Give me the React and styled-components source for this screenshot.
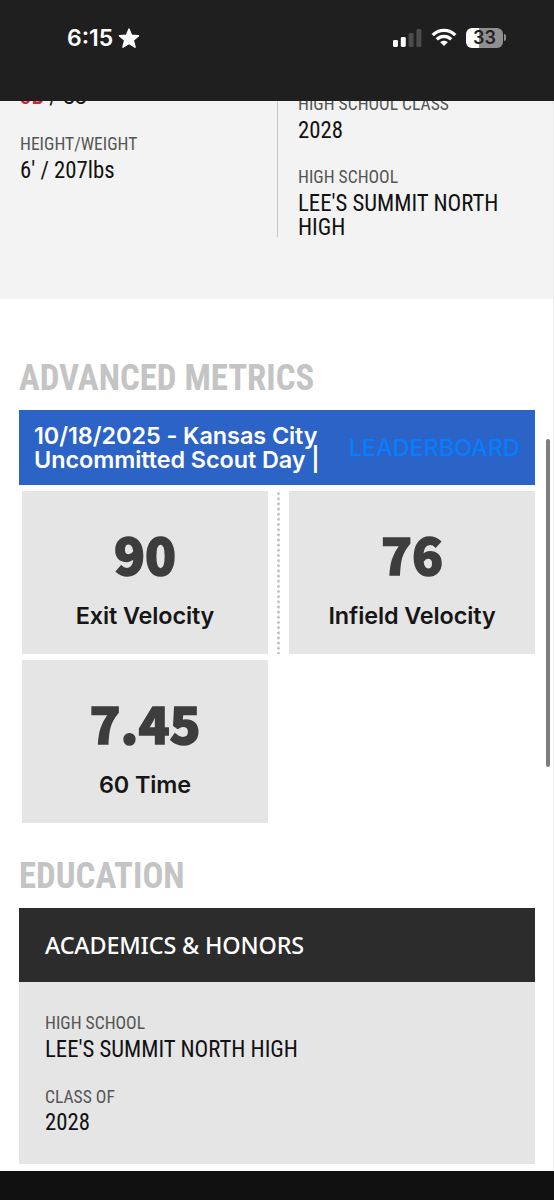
import React from "react";
import styled, { createGlobalStyle } from "styled-components";

const metricas = [
    { valor: '90', nombre: 'Exit Velocity' },
    { valor: '76', nombre: 'Infield Velocity', separador: true },
    { valor: '7.45', nombre: '60 Time' },
];

const Dato = ({ etiqueta, children }) => {
    return (
        <ContenedorDato>
            <Etiqueta>{etiqueta}</Etiqueta>
            <Valor>{children}</Valor>
        </ContenedorDato>
    )
}

const BarraEstado = () => {
    return (
        <Estado>
            <Hora>
                6:15
                <svg width="22" height="21" viewBox="0 0 22 21" fill="#fff">
                    <path d="M11 1.2L13.5 7.4L20.4 7.8L15.2 12.2L17 19.1L11 15.4L5 19.1L6.8 12.2L1.6 7.8L8.5 7.4Z" stroke="#fff" strokeWidth="1.6" strokeLinejoin="round" />
                </svg>
            </Hora>
            <Indicadores>
                <svg width="30" height="20" viewBox="0 0 30 20">
                    <rect x="1" y="12" width="5" height="7" rx="1.4" fill="#fff" />
                    <rect x="8.8" y="9" width="5" height="10" rx="1.4" fill="#fff" />
                    <rect x="16.6" y="5" width="5" height="14" rx="1.4" fill="#4c4c4c" />
                    <rect x="24.4" y="1" width="5" height="18" rx="1.4" fill="#4c4c4c" />
                </svg>
                <svg width="26" height="19" viewBox="0 0 26 19" fill="none" stroke="#fff" strokeWidth="3.2">
                    <path d="M1.7 7.1C8 0.8 18 0.8 24.3 7.1" />
                    <path d="M5.8 11.3C9.8 7.3 16.2 7.3 20.2 11.3" />
                    <path d="M13 18L9.2 14.2C11.3 12.2 14.7 12.2 16.8 14.2Z" fill="#fff" stroke="none" />
                </svg>
                <Bateria><Carga>33</Carga><Polo /></Bateria>
            </Indicadores>
        </Estado>
    )
}

const App = () => {
    return (
        <>
            <EstiloGlobal />
            <Pantalla>
                <BarraEstado />
                <Perfil>
                    <Columna $subir="43.4px">
                        <Dato etiqueta="POSITION"><Posicion>3B</Posicion> / SS</Dato>
                        <Dato etiqueta="HEIGHT/WEIGHT">6' / 207lbs</Dato>
                    </Columna>
                    <Columna $subir="10.2px" $borde>
                        <Dato etiqueta="HIGH SCHOOL CLASS">2028</Dato>
                        <Dato etiqueta="HIGH SCHOOL">LEE'S SUMMIT NORTH<br />HIGH</Dato>
                    </Columna>
                </Perfil>
                <Contenido>
                    <Titulo>ADVANCED METRICS</Titulo>
                    <Evento>
                        <NombreEvento>10/18/2025 - Kansas City<br />Uncommitted Scout Day |</NombreEvento>
                        <Enlace>LEADERBOARD</Enlace>
                    </Evento>
                    <Rejilla>
                        {metricas.map(({ valor, nombre, separador }) => (
                            <React.Fragment key={nombre}>
                                {separador ? <Puntos /> : null}
                                <Tarjeta>
                                    <Numero>{valor}</Numero>
                                    <NombreMetrica>{nombre}</NombreMetrica>
                                </Tarjeta>
                            </React.Fragment>
                        ))}
                    </Rejilla>
                    <Titulo>EDUCATION</Titulo>
                    <EncabezadoPanel>ACADEMICS &amp; HONORS</EncabezadoPanel>
                    <Panel>
                        <Dato etiqueta="HIGH SCHOOL">LEE'S SUMMIT NORTH HIGH</Dato>
                        <Dato etiqueta="CLASS OF">2028</Dato>
                    </Panel>
                </Contenido>
                <BarraInferior />
                <Desplazamiento />
            </Pantalla>
        </>
    )
}

export default App;

const EstiloGlobal = createGlobalStyle`
    * {
        box-sizing: border-box;
    }

    body {
        margin: 0;
        background: #fff;
    }
`;

const Pantalla = styled.div`
    width: 554px;
    height: 1200px;
    position: relative;
    overflow: hidden;
    display: flex;
    flex-direction: column;
    background: #fff;
    font-family: Inter, "Liberation Sans", sans-serif;
`;

const Estado = styled.header`
    height: 101px;
    flex: none;
    display: flex;
    justify-content: space-between;
    align-items: flex-start;
    padding: 25px 48px 0 67px;
    background: #1f1f1f;
    position: relative;
    z-index: 1;
`;

const Hora = styled.div`
    height: 26px;
    display: flex;
    align-items: center;
    gap: 5px;
    color: #fff;
    font-size: 23px;
    font-weight: 600;
`;

const Indicadores = styled.div`
    height: 25px;
    display: flex;
    align-items: center;
    gap: 9px;
`;

const Bateria = styled.div`
    display: flex;
    align-items: center;
    gap: 1px;
`;

const Carga = styled.div`
    width: 37px;
    height: 20px;
    border-radius: 6px;
    background: linear-gradient(to right, #fff 13px, #8f8f8f 13px);
    color: #1f1f1f;
    font-size: 18px;
    font-weight: 600;
    line-height: 20px;
    text-align: center;
`;

const Polo = styled.div`
    width: 2px;
    height: 7px;
    border-radius: 0 2px 2px 0;
    background: #8f8f8f;
`;

const Perfil = styled.section`
    height: 198px;
    flex: none;
    display: flex;
    align-items: flex-start;
    padding: 0 20px;
    background: #f3f3f3;
    border-right: 1px solid #e9e9e9;
`;

const Columna = styled.div`
    width: 257px;
    flex: none;
    height: ${({ $borde }) => $borde ? '146px' : 'auto'};
    margin-top: -${({ $subir }) => $subir};
    padding-left: ${({ $borde }) => $borde ? '20px' : '0'};
    border-left: ${({ $borde }) => $borde ? '1px solid #c6c6c6' : 'none'};
`;

const TextoEstrecho = styled.div`
    width: max-content;
    font-family: "Roboto Condensed", Roboto, sans-serif;
    font-stretch: 75%;
    white-space: nowrap;
    transform-origin: left;
`;

const ContenedorDato = styled.div`
    margin-bottom: 22.4px;
`;

const Etiqueta = styled(TextoEstrecho)`
    color: #555;
    font-size: 18.7px;
    line-height: 27.8px;
    transform: scaleX(0.94);
`;

const Valor = styled(TextoEstrecho)`
    color: #111;
    font-size: 23.4px;
    line-height: 23.4px;
    transform: scaleX(0.973);
`;

const Posicion = styled.b`
    color: #d0243f;
    font-weight: 500;
`;

const Contenido = styled.main`
    flex: 1;
    padding: 56px 18px 0 19px;
    border-right: 1px solid #ededed;
`;

const Titulo = styled(TextoEstrecho).attrs({ as: 'h2' })`
    height: 55px;
    margin: 0;
    color: #c4c4c4;
    font-size: 37px;
    font-weight: 700;
    line-height: 46px;
    transform: scaleX(0.94);
`;

const Evento = styled.div`
    height: 75px;
    display: flex;
    align-items: center;
    justify-content: space-between;
    padding: 0 15px;
    background: #2b63c6;
    font-size: 23.4px;
    line-height: 23.4px;
`;

const NombreEvento = styled.div`
    color: #fff;
    font-weight: 600;
    letter-spacing: -0.06px;
    white-space: nowrap;
`;

const Enlace = styled.a`
    color: #077cff;
    font-weight: 500;
`;

const Rejilla = styled.div`
    display: grid;
    grid-template-columns: 246px 21px 246px;
    row-gap: 6px;
    padding: 6px 0 30px 3px;
`;

const Puntos = styled.div`
    width: 3px;
    margin-left: 9px;
    background: radial-gradient(circle, #c4c4c4 1.2px, transparent 1.7px) 0 0 / 3px 5.16px;
`;

const Tarjeta = styled.div`
    height: 163px;
    display: flex;
    flex-direction: column;
    align-items: center;
    padding-top: 34px;
    background: #e5e5e5;
`;

const Numero = styled.div`
    color: #3d3d3d;
    font-family: "Noto Sans CJK SC", "Noto Sans", sans-serif;
    font-size: 51px;
    font-weight: 900;
    line-height: 56px;
    -webkit-text-stroke: 1.5px #3d3d3d;
`;

const NombreMetrica = styled.div`
    margin-top: 21px;
    color: #161616;
    font-size: 23.4px;
    font-weight: 600;
    letter-spacing: -0.1px;
    line-height: 28px;
`;

const EncabezadoPanel = styled.div`
    height: 74px;
    padding-left: 26px;
    background: #2c2c2c;
    color: #fff;
    font-family: "Noto Sans", sans-serif;
    font-size: 23.4px;
    font-weight: 500;
    letter-spacing: -0.17px;
    line-height: 75px;
`;

const Panel = styled.div`
    height: 182px;
    padding: 28px 26px 0;
    background: #e5e5e5;
`;

const BarraInferior = styled.footer`
    height: 29px;
    flex: none;
    background: #111;
`;

const Desplazamiento = styled.div`
    width: 4px;
    height: 328px;
    position: absolute;
    top: 439px;
    right: 4px;
    border-radius: 2px;
    background: #7d7d7d;
`;
